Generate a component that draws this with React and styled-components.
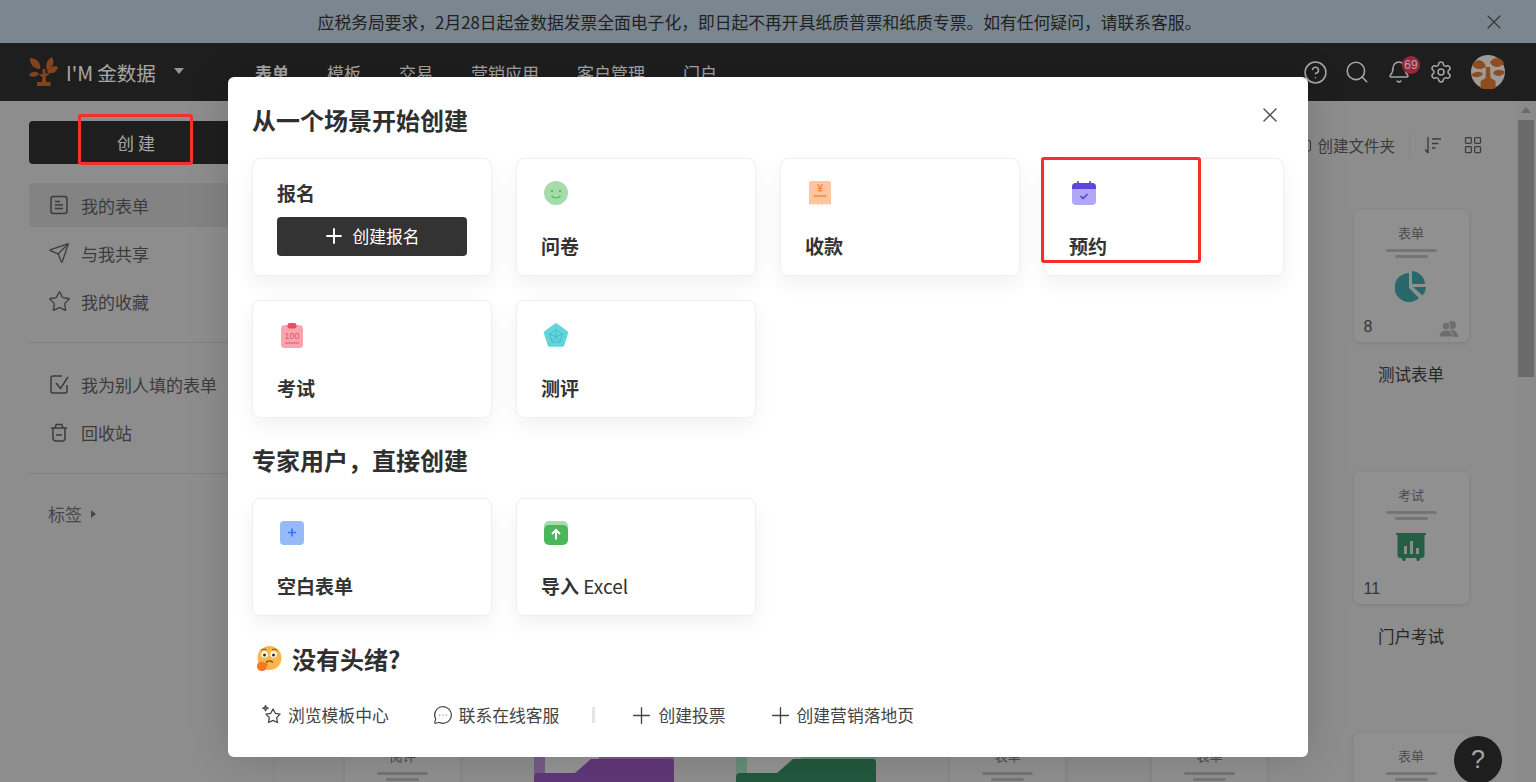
import React from 'react';
import styled, { createGlobalStyle } from 'styled-components';
import { X, Search, Bell, Settings, CircleHelp, Send, Star, Plus, MessageCircleMore, LayoutGrid, FolderPlus } from 'lucide-react';

const FONT = '"Noto Sans CJK SC", "Noto Sans", sans-serif';

const GlobalStyle = createGlobalStyle`
  html, body {
    margin: 0;
    height: 100%;
    overflow: hidden;
    background: #d9d9d9;
    font-family: ${FONT};
  }
  * {
    box-sizing: border-box;
  }
`;

const Page = styled.div`
  position: relative;
  height: 100vh;
  display: flex;
  flex-direction: column;
  overflow: hidden;
  color: #666;
`;

const Banner = styled.div`
  position: relative;
  flex: 0 0 43px;
  display: flex;
  align-items: center;
  justify-content: center;
  background: #bcd0df;
  color: #333;
  font-size: 16.8px;
  padding-right: 17px;
`;

const BannerClose = styled.span`
  position: absolute;
  right: 30px;
  top: 10px;
  display: flex;
  color: #555;
`;

const Header = styled.header`
  flex: 0 0 58px;
  display: flex;
  align-items: center;
  padding: 0 31px 0 29px;
  background: #2e2e2e;
  color: #fff;
`;

const Brand = styled.div`
  display: flex;
  align-items: center;
  gap: 7px;
  font-size: 19.5px;
  width: 226px;
  color: #fff;
`;

const Caret = styled.i`
  width: 0;
  height: 0;
  margin-left: 11px;
  margin-top: -3px;
  border-left: 5px solid transparent;
  border-right: 5px solid transparent;
  border-top: 6px solid #e6e6e6;
`;

const Nav = styled.nav`
  display: flex;
  gap: 38px;
  font-size: 17px;
`;

const NavItem = styled.a`
  font-weight: ${(p) => (p.$active ? 700 : 400)};
  color: #fff;
`;

const HeaderTools = styled.div`
  margin-left: auto;
  display: flex;
  align-items: center;
`;

const ToolButton = styled.span`
  position: relative;
  width: 42px;
  display: flex;
  justify-content: center;
  color: #fff;
`;

const Badge = styled.b`
  position: absolute;
  left: 24px;
  top: -4px;
  width: 18px;
  height: 18px;
  border-radius: 50%;
  background: #f03a5c;
  color: #fff;
  font: 400 12px/18px "Liberation Sans", sans-serif;
  text-align: center;
`;

const Avatar = styled.svg`
  width: 34px;
  height: 34px;
  margin-left: 9px;
`;

const Body = styled.div`
  flex: 1;
  display: flex;
  min-height: 0;
`;

const Sidebar = styled.aside`
  flex: 0 0 273px;
  padding: 20px 29px;
  border-right: 1px solid #cfcfcf;
`;

const CreateButton = styled.button`
  display: block;
  width: 215px;
  height: 43px;
  margin-bottom: 19px;
  padding: 0 0 0 3px;
  border: 0;
  border-radius: 4px;
  background: #2e2e2e;
  color: #fff;
  font: 400 17px ${FONT};
  letter-spacing: 4px;
`;

const SideRow = styled.div`
  display: flex;
  align-items: center;
  gap: 12px;
  height: 44px;
  margin-bottom: 4px;
  padding-left: 20px;
  border-radius: 4px;
  background: ${(p) => (p.$active ? '#c9c9c9' : 'transparent')};
  color: #5c5c5c;
  font-size: 17px;
`;

const SideIcon = styled.span`
  flex: 0 0 20px;
  width: 20px;
  min-width: 0;
  height: 20px;
  display: flex;
  align-items: center;
  justify-content: center;
  svg {
    flex-shrink: 0;
  }
`;

const SideDivider = styled.hr`
  margin: 19px 0;
  border: 0;
  border-top: 1px solid #c4c4c4;
`;

const TagLabel = styled.div`
  display: flex;
  align-items: center;
  gap: 9px;
  margin: 27px 0 0 19px;
  color: #6e6e6e;
  font-size: 17px;
`;

const TagArrow = styled.i`
  width: 0;
  height: 0;
  border-top: 4px solid transparent;
  border-bottom: 4px solid transparent;
  border-left: 5px solid #6e6e6e;
`;

const Main = styled.main`
  flex: 1;
  min-width: 0;
  overflow: hidden;
`;

const Toolbar = styled.div`
  display: flex;
  align-items: center;
  justify-content: flex-end;
  height: 40px;
  margin-top: 24px;
  padding-right: 33px;
  color: #5c5c5c;
  font-size: 15.5px;
`;

const ToolbarLink = styled.span`
  display: flex;
  align-items: center;
  gap: 5px;
  padding-right: 14px;
  border-right: 1px solid #c8c8c8;
  line-height: 22px;
`;

const SortIcon = styled.svg`
  width: 20px;
  height: 20px;
  margin: 0 20px 0 13px;
`;

const FormGrid = styled.div`
  display: grid;
  grid-template-columns: repeat(6, 201.67px);
  grid-auto-rows: 261.6px;
  margin: 45px 0 0 28px;
`;

const FormItem = styled.div`
  display: flex;
  flex-direction: column;
  align-items: center;
`;

const FormCard = styled.div`
  position: relative;
  width: 115px;
  height: 132px;
  display: flex;
  flex-direction: column;
  align-items: center;
  padding-top: 13px;
  border-radius: 6px;
  background: #dedede;
  box-shadow: 0 1px 4px rgba(0, 0, 0, 0.12);
  color: #777;
  font-size: 13px;
  line-height: 20px;
`;

const CardRule = styled.i`
  width: ${(p) => p.$w}px;
  height: 3px;
  margin-top: ${(p) => p.$top}px;
  background: #b4b4b4;
  border-radius: 2px;
`;

const CardCount = styled.span`
  position: absolute;
  left: 10px;
  bottom: 3px;
  color: #555;
  font: 400 16px/24px "Liberation Sans", sans-serif;
`;

const CardPeople = styled.svg`
  position: absolute;
  right: 10px;
  bottom: 4px;
  width: 20px;
  height: 18px;
`;

const CardIcon = styled.svg`
  width: 32px;
  height: 32px;
  margin-top: 12px;
`;

const FormName = styled.div`
  margin-top: 20px;
  color: #3d3d3d;
  font-size: 16.5px;
  line-height: 24px;
`;

const FolderArt = styled.svg`
  width: 140px;
  height: 120px;
  margin-top: 12px;
`;

const Track = styled.div`
  flex: 0 0 20px;
  padding: 19px 2px 0;
  background: #d6d6d6;
`;

const Thumb = styled.div`
  position: relative;
  height: 257px;
  background: #a4a4a4;
  &::before {
    content: '';
    position: absolute;
    left: 3px;
    top: -13px;
    border-left: 5px solid transparent;
    border-right: 5px solid transparent;
    border-bottom: 6px solid #a4a4a4;
  }
`;

const HelpBubble = styled.div`
  position: absolute;
  left: 1454px;
  top: 736px;
  width: 48px;
  height: 48px;
  border-radius: 50%;
  background: #2e2e2e;
  color: #fff;
  font: 400 25px/46px "Liberation Sans", sans-serif;
  text-align: center;
`;

const Overlay = styled.div`
  position: absolute;
  inset: 0;
  display: flex;
  justify-content: center;
  padding-top: 77px;
  background: rgba(0, 0, 0, 0.35);
`;

const Modal = styled.div`
  position: relative;
  width: 1080px;
  height: 680px;
  padding: 27px 24px 0;
  border-radius: 6px;
  background: #fff;
  color: #333;
  box-shadow: 0 0 40px rgba(0, 0, 0, 0.16);
`;

const ModalClose = styled.span`
  position: absolute;
  right: 26px;
  top: 26px;
  display: flex;
  color: #555;
`;

const SectionTitle = styled.h2`
  display: flex;
  align-items: center;
  gap: 10px;
  height: 32px;
  margin: ${(p) => (p.$first ? '0 0 22px' : p.$indent ? '27px 0 21px' : '26px 0 22px')};
  padding-left: ${(p) => (p.$indent ? '4px' : '0')};
  color: #2f2f2f;
  font-size: 24px;
  line-height: 32px;
  font-weight: 700;
`;

const SceneGrid = styled.div`
  display: grid;
  grid-template-columns: repeat(4, 240px);
  grid-auto-rows: 118px;
  gap: 24px;
`;

const SceneCard = styled.div`
  display: flex;
  flex-direction: column;
  justify-content: space-between;
  padding: 19px 24px 16px;
  border: 1px solid #f0f0f0;
  border-radius: 8px;
  background: #fff;
  box-shadow: 0 8px 20px rgba(0, 0, 0, 0.06);
`;

const SignupCard = styled(SceneCard)`
  justify-content: flex-start;
  padding: 21px 24px 19px;
`;

const SceneLabel = styled.div`
  color: #333;
  font-size: 19px;
  line-height: 26px;
  font-weight: 700;
`;

const SceneLatin = styled.span`
  font-weight: 400;
`;

const SignupButton = styled.button`
  display: flex;
  align-items: center;
  justify-content: center;
  gap: 6px;
  width: 190px;
  height: 39px;
  margin-top: 11px;
  padding: 0 2px 2px 0;
  border: 0;
  border-radius: 4px;
  background: #333;
  color: #fff;
  font: 400 16.8px ${FONT};
`;

const SceneIcon = styled.svg`
  width: 30px;
  height: 30px;
  display: block;
`;

const LinkRow = styled.div`
  display: flex;
  align-items: center;
  height: 24px;
  margin-top: 28px;
  padding-left: 10px;
  color: #444;
  font-size: 16.8px;
`;

const QuickLink = styled.span`
  display: flex;
  align-items: center;
  gap: ${(p) => p.$gap || 6}px;
  margin-right: ${(p) => p.$after || 0}px;
`;

const LinkDivider = styled.i`
  width: 3px;
  height: 16px;
  margin: 0 33px;
  background: #e4e4e4;
`;

const Callout = styled.div`
  position: absolute;
  left: ${(p) => p.$x}px;
  top: ${(p) => p.$y}px;
  width: ${(p) => p.$w}px;
  height: ${(p) => p.$h}px;
  border: 3px solid #f5302a;
  border-radius: 3px;
  pointer-events: none;
`;

const TreeLogo = () => (
  <svg width="30" height="30" viewBox="0 0 30 30" fill="#c9692a">
    <path d="M1 1c7 0 11 5 10 11-6 0-10-4-10-11z" />
    <path d="M23 0c3 5 1 11-5 13-2-5 0-10 5-13z" />
    <path d="M0 18c3-4 8-4 10-1-3 3-7 4-10 1z" />
    <path d="M29 10c-1 5-6 8-11 5 1-4 6-7 11-5z" />
    <path d="M13.500 12h2.800l.4 5 3-1.600.8 1.300-4 3 .6 5.300h4.400V29H8v-4h4.800l.7-4.500-3.200-2.500 1-1.200 2.200 1.300z" />
  </svg>
);

const SmileIcon = () => (
  <SceneIcon viewBox="0 0 30 30">
    <circle cx="15" cy="15" r="12" fill="#a6dcaa" />
    <circle cx="11" cy="13" r="1.200" fill="#55b968" />
    <circle cx="19" cy="13" r="1.200" fill="#55b968" />
    <path d="M10.500 18c2 2.500 7 2.500 9 0" fill="none" stroke="#55b968" strokeWidth="1.300" />
  </SceneIcon>
);

const ReceiptIcon = () => (
  <SceneIcon viewBox="0 0 30 30">
    <path d="M4 5a2 2 0 0 1 2-2h18a2 2 0 0 1 2 2v22l-2.200-1.200-2.200 1.200-2.200-1.200-2.200 1.200-2.200-1.200-2.200 1.200-2.200-1.200-2.200 1.200L6 25.800 4 27z" fill="#fdc6a0" />
    <text x="15" y="14" textAnchor="middle" fontSize="11" fontFamily="Liberation Sans" fontWeight="700" fill="#f58a45">¥</text>
    <path d="M8.500 18h13" stroke="#f58a45" strokeWidth="1.500" />
  </SceneIcon>
);

const CalendarIcon = () => (
  <SceneIcon viewBox="0 0 30 30">
    <rect x="3" y="5" width="24" height="22" rx="4" fill="#b1a7f4" />
    <path d="M3 11V9a4 4 0 0 1 4-4h16a4 4 0 0 1 4 4v2z" fill="#5b47dc" />
    <path d="M9 3v3M21 3v3" stroke="#5b47dc" strokeWidth="1.600" />
    <path d="M11.500 18l2.500 2.500 4.500-4.500" fill="none" stroke="#5b47dc" strokeWidth="1.700" />
  </SceneIcon>
);

const ExamIcon = () => (
  <SceneIcon viewBox="0 0 30 30">
    <rect x="4" y="5" width="22" height="23" rx="3.500" fill="#f8a5af" />
    <rect x="10.500" y="3" width="9" height="5.500" rx="2" fill="#ea4e60" />
    <text x="15" y="19" textAnchor="middle" fontSize="9" fontFamily="Liberation Sans" fill="#e45567">100</text>
    <path d="M8 23h14" stroke="#e45567" strokeWidth="1" />
  </SceneIcon>
);

const RadarIcon = () => (
  <SceneIcon viewBox="0 0 30 30">
    <path d="M15 5l10.500 7.600-4 12.400h-13L4.500 12.600z" fill="#63d5dc" stroke="#63d5dc" strokeLinejoin="round" strokeWidth="3.500" />
    <path d="M15 9.500l6.500 4.700-2.500 7.800h-8l-2.500-7.800zM15 9.500v7M8.500 14.200L15 16.500M21.500 14.200L15 16.500M11 22l4-5.500M19 22l-4-5.500" fill="none" stroke="#3cbac4" strokeWidth="0.800" />
  </SceneIcon>
);

const BlankIcon = () => (
  <SceneIcon viewBox="0 0 30 30">
    <rect x="3" y="3" width="24" height="24" rx="4" fill="#95baf7" />
    <path d="M15 10.500v8M11 14.500h8" stroke="#3577ea" strokeWidth="1.700" />
  </SceneIcon>
);

const ExcelIcon = () => (
  <SceneIcon viewBox="0 0 30 30">
    <rect x="3" y="3" width="24" height="20" rx="5" fill="#a7dcae" />
    <rect x="3" y="7" width="24" height="20" rx="5" fill="#4bb75b" />
    <path d="M15 21.500v-9M11 16l4-4 4 4" fill="none" stroke="#fff" strokeWidth="2" />
  </SceneIcon>
);

const ThinkingFace = () => (
  <svg width="26" height="26" viewBox="0 0 26 26">
    <circle cx="13.500" cy="12" r="12" fill="#fbb64a" />
    <circle cx="8.500" cy="8.500" r="3.200" fill="#fff" />
    <circle cx="17.500" cy="8.500" r="3.200" fill="#fff" />
    <circle cx="8.500" cy="9" r="1.500" fill="#3a2a20" />
    <circle cx="17.500" cy="9" r="1.500" fill="#3a2a20" />
    <path d="M5 4.500c1.500-1.500 4-1.800 5.500-.8M16 3.700c1.500-1 4-.7 5.500.8" fill="none" stroke="#7a4a1c" strokeWidth="1" />
    <path d="M10 16.500c2-2.300 5-2.300 7 0" fill="none" stroke="#7a4a1c" strokeWidth="1.300" />
    <path d="M1 20c0-3 3-5 6-4l4 1.500c1.500.8 1 2.500-.5 2.500 1 2.500-1 5-4 5-3.500 0-5.500-2-5.500-5z" fill="#f47a24" />
  </svg>
);

const FormIcon = () => (
  <svg width="20" height="20" viewBox="0 0 20 20" fill="none" stroke="currentColor" strokeWidth="1.500">
    <rect x="2" y="1.500" width="16" height="17" rx="2.500" />
    <path d="M6 6.500h5M6 10h8M6 13.500h8" />
  </svg>
);

const CheckedIcon = () => (
  <svg width="20" height="20" viewBox="0 0 20 20" fill="none" stroke="currentColor" strokeWidth="1.500">
    <path d="M13 2H4a2 2 0 0 0-2 2v13a2 2 0 0 0 2 2h12a2 2 0 0 0 2-2v-6" />
    <path d="M7 9l4.500 5.500L19 3" />
  </svg>
);

const TrashIcon = () => (
  <svg width="20" height="20" viewBox="0 0 20 20" fill="none" stroke="currentColor" strokeWidth="1.500">
    <path d="M2 6h16M6 6l1.200-3.500h5.600L14 6M4 6v10a3 3 0 0 0 3 3h6a3 3 0 0 0 3-3V6M7 13h6" />
  </svg>
);

const SparkStar = () => (
  <svg width="20" height="22" viewBox="0 0 20 22" fill="none" stroke="#444" strokeWidth="1.300" strokeLinejoin="round">
    <path d="M11 5l2.300 4.300 4.700.8-3.300 3.500.7 4.900-4.400-2.100-4.400 2.100.7-4.900-3.300-3.500 4.700-.8z" />
    <path d="M3.500 1.500l.7 2 2 .7-2 .7-.7 2-.7-2-2-.7 2-.7z" />
  </svg>
);

const PieGlyph = () => (
  <CardIcon viewBox="0 0 32 32" fill="#3f9ea3">
    <path d="M14 3v15l10 10A14.500 14.500 0 1 1 14 3z" />
    <path d="M17 1a14 14 0 0 1 13 13H17z" />
    <path d="M18 17h13a14 14 0 0 1-3.500 8.500z" />
  </CardIcon>
);

const PotGlyph = () => (
  <CardIcon viewBox="0 0 32 32">
    <path d="M1 1h30v2h-1.500v20a3 3 0 0 1-3 3h-1l-1.500 3h-2l-1-3H11l-1 3H8l-1.500-3h-1a3 3 0 0 1-3-3V3H1z" fill="#36916a" />
    <path d="M9 14h3v8H9zM15 9h3v13h-3zM21 16h3v6h-3z" fill="#d8d8d8" />
  </CardIcon>
);

const PeopleGlyph = () => (
  <CardPeople viewBox="0 0 20 18" fill="#aaa">
    <circle cx="13" cy="5" r="4" />
    <path d="M8 17c0-4 2-7 5-7s6 3 6 7z" />
    <circle cx="7" cy="6" r="4" stroke="#dedede" />
    <path d="M0 17c0-4 3-7 7-7s7 3 7 7z" stroke="#dedede" />
  </CardPeople>
);

const Folder = ({ back, front }) => (
  <FolderArt viewBox="0 0 140 120">
    <rect width="140" height="120" rx="4" fill={back} />
    <rect x="11" y="0" width="54" height="40" fill="#e4e4e4" />
    <path d="M0 32a4 4 0 0 1 4-4h37l16-14h79a4 4 0 0 1 4 4v102H0z" fill={front} />
  </FolderArt>
);

const sideTop = [
  { text: '我的表单', icon: <FormIcon />, active: true },
  { text: '与我共享', icon: <Send size={22} strokeWidth={1.4} /> },
  { text: '我的收藏', icon: <Star size={23} strokeWidth={1.4} /> },
];

const sideBottom = [
  { text: '我为别人填的表单', icon: <CheckedIcon /> },
  { text: '回收站', icon: <TrashIcon /> },
];

// the first two rows sit behind the dialog except for their last card
const forms = [
  ...Array.from({ length: 5 }, () => ({})),
  { label: '表单', glyph: <PieGlyph />, count: 8, shared: true, name: '测试表单' },
  ...Array.from({ length: 5 }, () => ({})),
  { label: '考试', glyph: <PotGlyph />, count: 11, name: '门户考试' },
  { label: '阅评' },
  { folder: ['#b78ad0', '#9455b9'] },
  { folder: ['#a0d8ba', '#378960'] },
  { label: '表单' },
  { label: '表单' },
  { label: '表单' },
];

const scenes = [
  { label: '问卷', icon: <SmileIcon /> },
  { label: '收款', icon: <ReceiptIcon /> },
  { label: '预约', icon: <CalendarIcon /> },
  { label: '考试', icon: <ExamIcon /> },
  { label: '测评', icon: <RadarIcon /> },
];

const App = () => (
  <Page>
    <GlobalStyle />
    <Banner>
      应税务局要求，2月28日起金数据发票全面电子化，即日起不再开具纸质普票和纸质专票。如有任何疑问，请联系客服。
      <BannerClose>
        <X size={24} strokeWidth={1.2} />
      </BannerClose>
    </Banner>

    <Header>
      <Brand>
        <TreeLogo />
        I&apos;M 金数据
        <Caret />
      </Brand>
      <Nav>
        <NavItem $active>表单</NavItem>
        <NavItem>模板</NavItem>
        <NavItem>交易</NavItem>
        <NavItem>营销应用</NavItem>
        <NavItem>客户管理</NavItem>
        <NavItem>门户</NavItem>
      </Nav>
      <HeaderTools>
        <ToolButton>
          <CircleHelp size={25} strokeWidth={1.5} />
        </ToolButton>
        <ToolButton>
          <Search size={26} strokeWidth={1.5} />
        </ToolButton>
        <ToolButton>
          <Bell size={24} strokeWidth={1.5} />
          <Badge>69</Badge>
        </ToolButton>
        <ToolButton>
          <Settings size={24} strokeWidth={1.5} />
        </ToolButton>
        <Avatar viewBox="0 0 34 34">
          <circle cx="17" cy="17" r="17" fill="#f2eee9" />
          <path d="M1 10c4-7 12-6 14 2-5 3-11 3-14-2zM33 8c-3-6-10-7-14-1 2 6 10 7 14 1zM0 20c4-4 10-4 12-1-3 4-9 4-12 1zM34 17c-4-3-10-3-12 1 3 4 9 4 12-1z" fill="#d9772f" />
          <path d="M15 12h4l.6 11 5 3v7a17 17 0 0 1-15 0v-7l5-3z" fill="#d9772f" />
        </Avatar>
      </HeaderTools>
    </Header>

    <Body>
      <Sidebar>
        <CreateButton>创建</CreateButton>
        {sideTop.map((row) => (
          <SideRow key={row.text} $active={row.active}>
            <SideIcon>{row.icon}</SideIcon>
            {row.text}
          </SideRow>
        ))}
        <SideDivider />
        {sideBottom.map((row) => (
          <SideRow key={row.text}>
            <SideIcon>{row.icon}</SideIcon>
            {row.text}
          </SideRow>
        ))}
        <SideDivider />
        <TagLabel>
          标签
          <TagArrow />
        </TagLabel>
      </Sidebar>

      <Main>
        <Toolbar>
          <ToolbarLink>
            <FolderPlus size={18} strokeWidth={1.4} />
            创建文件夹
          </ToolbarLink>
          <SortIcon viewBox="0 0 20 20" fill="none" stroke="currentColor" strokeWidth="1.400">
            <path d="M5 2v16M2 14.500L5 18M9 4h9M9 8.500h6.500M9 13h3.500" />
          </SortIcon>
          <LayoutGrid size={20} strokeWidth={1.5} />
        </Toolbar>
        <FormGrid>
          {forms.map((form, i) => (
            <FormItem key={i}>
              {form.folder ? (
                <Folder back={form.folder[0]} front={form.folder[1]} />
              ) : (
                <>
                  <FormCard>
                    {form.label}
                    <CardRule $w={51} $top={6} />
                    <CardRule $w={33} $top={3} />
                    {form.glyph}
                    {form.count && <CardCount>{form.count}</CardCount>}
                    {form.shared && <PeopleGlyph />}
                  </FormCard>
                  <FormName>{form.name}</FormName>
                </>
              )}
            </FormItem>
          ))}
        </FormGrid>
      </Main>

      <Track>
        <Thumb />
      </Track>
    </Body>

    <HelpBubble>?</HelpBubble>

    <Overlay>
      <Modal>
        <ModalClose>
          <X size={24} strokeWidth={1.5} />
        </ModalClose>
        <SectionTitle $first>从一个场景开始创建</SectionTitle>
        <SceneGrid>
          <SignupCard>
            <SceneLabel>报名</SceneLabel>
            <SignupButton>
              <Plus size={24} strokeWidth={1.9} />
              创建报名
            </SignupButton>
          </SignupCard>
          {scenes.map((scene) => (
            <SceneCard key={scene.label}>
              {scene.icon}
              <SceneLabel>{scene.label}</SceneLabel>
            </SceneCard>
          ))}
        </SceneGrid>

        <SectionTitle>专家用户，直接创建</SectionTitle>
        <SceneGrid>
          <SceneCard>
            <BlankIcon />
            <SceneLabel>空白表单</SceneLabel>
          </SceneCard>
          <SceneCard>
            <ExcelIcon />
            <SceneLabel>
              导入 <SceneLatin>Excel</SceneLatin>
            </SceneLabel>
          </SceneCard>
        </SceneGrid>

        <SectionTitle $indent>
          <ThinkingFace />
          没有头绪?
        </SectionTitle>
        <LinkRow>
          <QuickLink $after={44}>
            <SparkStar />
            浏览模板中心
          </QuickLink>
          <QuickLink>
            <MessageCircleMore size={20} strokeWidth={1.4} />
            联系在线客服
          </QuickLink>
          <LinkDivider />
          <QuickLink $gap={3} $after={41}>
            <Plus size={27} strokeWidth={1.2} />
            创建投票
          </QuickLink>
          <QuickLink $gap={3}>
            <Plus size={27} strokeWidth={1.2} />
            创建营销落地页
          </QuickLink>
        </LinkRow>
      </Modal>
    </Overlay>

    <Callout $x={78} $y={114} $w={115} $h={51} />
    <Callout $x={1041} $y={157} $w={160} $h={106} />
  </Page>
);

export default App;
